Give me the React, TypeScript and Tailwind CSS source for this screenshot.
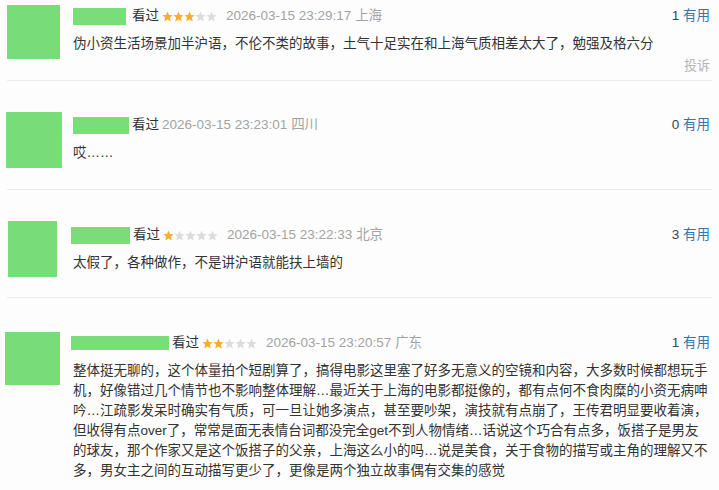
import type { ReactNode } from 'react'

const STAR = 'M5.5 0.4 L7 3.9 L10.7 4.15 L7.85 6.6 L8.75 10.4 L5.5 8.4 L2.25 10.4 L3.15 6.6 L0.3 4.15 L4 3.9 Z'

function Stars({ n }: { n: number }) {
  return (
    <svg width="55" height="11" viewBox="0 0 55 11" className="ml-[3px] shrink-0">
      {[0, 1, 2, 3, 4].map((i) => (
        <path key={i} d={STAR} transform={`translate(${i * 11} 0)`} fill={i < n ? '#ffac2d' : '#dcdcdc'} />
      ))}
    </svg>
  )
}

interface ReviewProps {
  box: string
  avatar: string
  content: string
  name: string
  stars?: number
  date: string
  loc: string
  useful: number
  report?: boolean
  children: ReactNode
}

function Review({ box, avatar, content, name, stars, date, loc, useful, report, children }: ReviewProps) {
  return (
    <div className={`mx-[7px] flex border-b border-[#ebebeb] ${box}`}>
      <div className="w-[66px] shrink-0">
        <div className={`bg-[#78dd78] ${avatar}`} />
      </div>
      <div className={`flex min-w-0 flex-1 flex-col pr-[2px] ${content}`}>
        <div className="flex h-[20px] items-center text-[13.5px]">
          <div className={`shrink-0 bg-[#79de79] ${name}`} />
          <span className="ml-[3px] text-[#333]">看过</span>
          {stars !== undefined && <Stars n={stars} />}
          <span className={`${stars !== undefined ? 'ml-[9px]' : 'ml-[3px]'} text-[#a3a3a3]`}>
            {date} {loc}
          </span>
          <span className="ml-auto text-[#3e4450]">
            {useful} <span className="text-[#3377aa]">有用</span>
          </span>
        </div>
        <div className="mt-2 text-[13.5px] leading-[20px] text-[#333]">{children}</div>
        {report && <div className="mt-[3px] self-end text-[13px] leading-[18px] text-[#b5b5b5]">投诉</div>}
      </div>
    </div>
  )
}

const LONG = [
  '整体挺无聊的，这个体量拍个短剧算了，搞得电影这里塞了好多无意义的空镜和内容，大多数时候都想玩手',
  '机，好像错过几个情节也不影响整体理解…最近关于上海的电影都挺像的，都有点何不食肉糜的小资无病呻',
  '吟…江疏影发呆时确实有气质，可一旦让她多演点，甚至要吵架，演技就有点崩了，王传君明显要收着演，',
  '但收得有点over了，常常是面无表情台词都没完全get不到人物情绪…话说这个巧合有点多，饭搭子是男友',
  '的球友，那个作家又是这个饭搭子的父亲，上海这么小的吗…说是美食，关于食物的描写或主角的理解又不',
  '多，男女主之间的互动描写更少了，更像是两个独立故事偶有交集的感觉',
]

export default function App() {
  return (
    <div className="h-[490px] w-[719px] overflow-hidden bg-[#fdfdfe] font-['Liberation_Sans','Noto_Sans_CJK_SC',sans-serif]">
      <Review
        box="h-[81px] pt-[5px]"
        avatar="h-[54px] w-[53px]"
        content="pt-px"
        name="h-[17px] w-[53px] mr-[3px]"
        stars={3}
        date="2026-03-15 23:29:17"
        loc="上海"
        useful={1}
        report
      >
        <div className="whitespace-nowrap">伪小资生活场景加半沪语，不伦不类的故事，土气十足实在和上海气质相差太大了，勉强及格六分</div>
      </Review>
      <Review
        box="h-[109px] pt-[31px]"
        avatar="-ml-px h-[56px] w-[56px]"
        content="pt-[3px]"
        name="h-[17px] w-[56px]"
        date="2026-03-15 23:23:01"
        loc="四川"
        useful={0}
      >
        <div className="whitespace-nowrap">哎……</div>
      </Review>
      <Review
        box="h-[108px] pt-[31px]"
        avatar="ml-px h-[56px] w-[49px]"
        content="pt-[4px]"
        name="-ml-[2px] h-[17px] w-[59px]"
        stars={1}
        date="2026-03-15 23:22:33"
        loc="北京"
        useful={3}
      >
        <div className="whitespace-nowrap">太假了，各种做作，不是讲沪语就能扶上墙的</div>
      </Review>
      <Review
        box="h-[200px] pt-[34px]"
        avatar="-ml-[2px] h-[53px] w-[55px]"
        content="pt-px"
        name="-ml-[2px] h-[14px] w-[98px]"
        stars={2}
        date="2026-03-15 23:20:57"
        loc="广东"
        useful={1}
      >
        {LONG.map((l) => (
          <div key={l} className="whitespace-nowrap">
            {l}
          </div>
        ))}
      </Review>
    </div>
  )
}
